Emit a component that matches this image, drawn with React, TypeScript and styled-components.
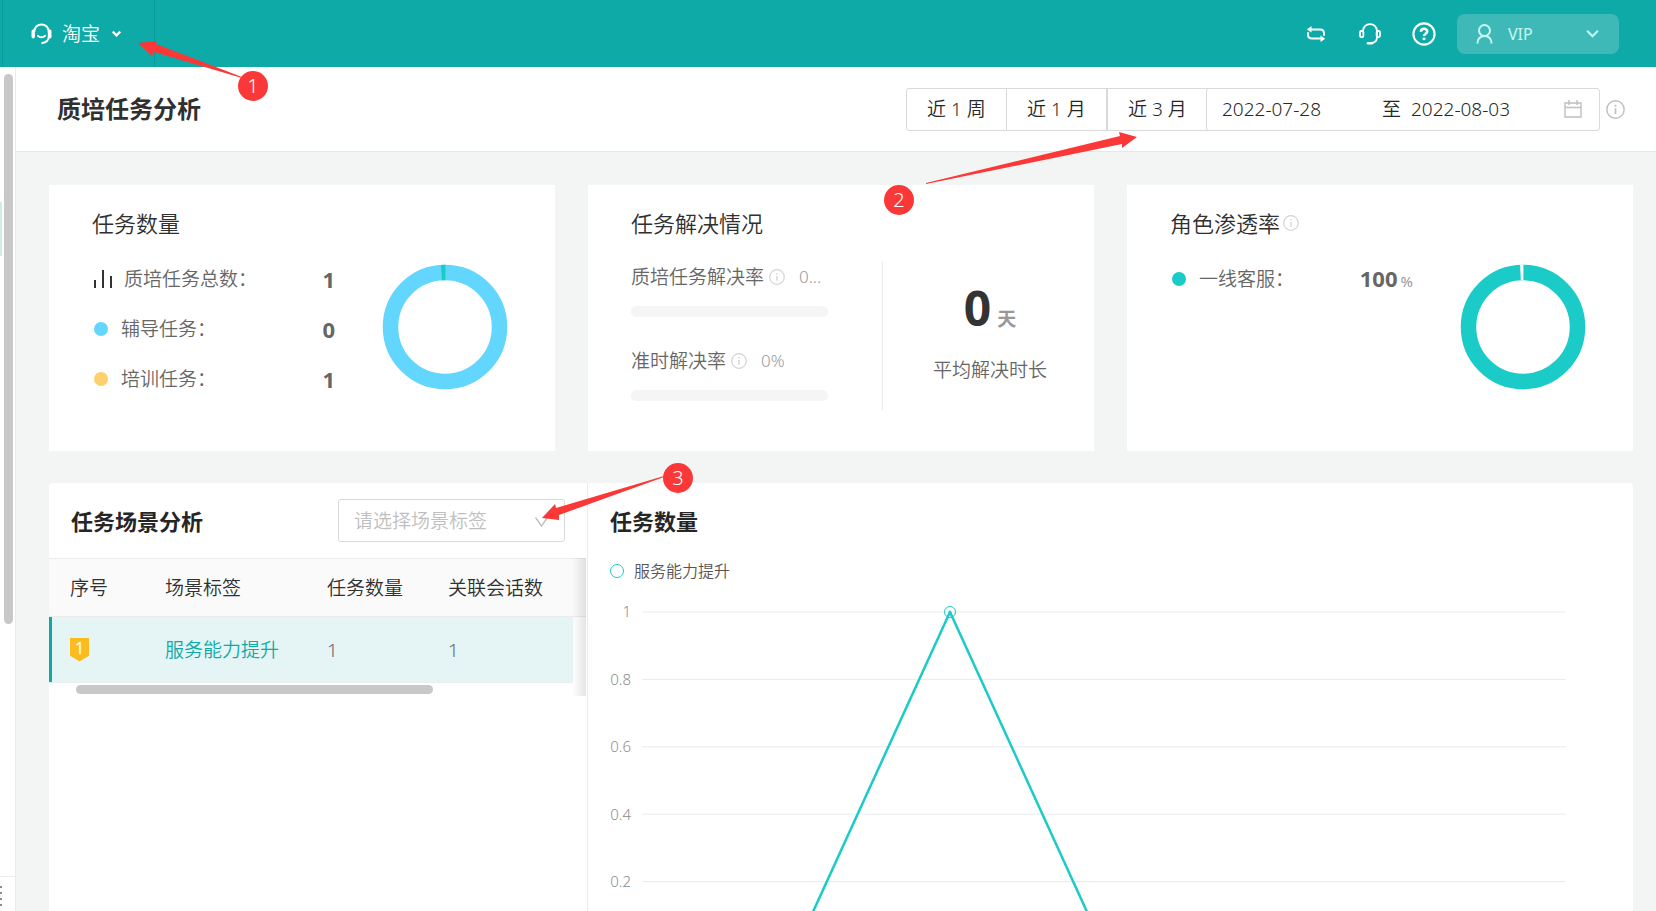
import React from "react";
import styled, { createGlobalStyle } from "styled-components";

const TEAL = "#0daaa7";
const CYAN = "#1acbc8";
const RED = "#fb3838";
const LINE = "#ebebeb";

const GlobalStyle = createGlobalStyle`
  *, *::before, *::after { box-sizing: border-box; }
  body {
    margin: 0;
    font-family: "Noto Sans", "Noto Sans CJK SC", sans-serif;
    font-size: 19px;
    line-height: 28px;
    font-weight: 350;
    color: #303030;
    background: #f3f5f5;
  }
  button, input, select { font: inherit; color: inherit; }
  h1, h2 { margin: 0; }
`;

const Shell = styled.div`
  display: flex;
  flex-direction: column;
  height: 100vh;
  overflow: hidden;
`;

/* ---------- top bar ---------- */

const TopBar = styled.header`
  display: flex;
  flex: none;
  align-items: center;
  justify-content: space-between;
  height: 67px;
  padding: 0 37px 0 2px;
  background: ${TEAL};
  color: #fff;
`;

const Brand = styled.div`
  position: relative;
  z-index: 2;
  width: 153px;
  height: 67px;
  border: solid #0b9a99;
  border-width: 0 1px;
`;

const BrandButton = styled.button`
  display: flex;
  align-items: center;
  width: 100%;
  height: 100%;
  padding: 0 0 0 28px;
  border: 0;
  background: none;

  span { margin: 0 12px 0 10px; }
`;

const Tools = styled.div`
  display: flex;
  align-items: center;
`;

const IconButton = styled.button`
  display: flex;
  align-items: center;
  justify-content: center;
  width: 54px;
  height: 54px;
  padding: 0;
  border: 0;
  background: none;
`;

const Account = styled.button`
  display: flex;
  align-items: center;
  gap: 15px;
  width: 162px;
  height: 40px;
  margin-left: 6px;
  padding: 0 20px 0 19px;
  border: 0;
  border-radius: 8px;
  background: #3eb9b8;
  color: #c9f7f3;
  font-size: 16px;
  font-weight: 400;

  span { flex: 1; text-align: left; }
`;

/* ---------- page frame ---------- */

const Body = styled.div`
  display: flex;
  flex: 1;
  min-height: 0;
`;

const Sidebar = styled.aside`
  display: flex;
  flex: none;
  flex-direction: column;
  justify-content: space-between;
  width: 16px;
  border-right: 1px solid ${LINE};
  background: #fff;
`;

const SideTrack = styled.div`
  display: flex;
  justify-content: space-between;
  padding: 7px 2px 0 0;
`;

const SideActive = styled.div`
  width: 2px;
  height: 54px;
  margin-top: 128px;
  background: #d3ebe6;
`;

const SideThumb = styled.div`
  width: 9px;
  height: 550px;
  border-radius: 5px;
  background: #c8c8c8;
`;

const SideFooter = styled.div`
  display: flex;
  height: 35px;
  padding-top: 9px;
  border-top: 1px solid ${LINE};
`;

const Main = styled.main`
  flex: 1;
  min-width: 0;
  overflow: hidden;
`;

const PageHead = styled.div`
  display: flex;
  align-items: center;
  justify-content: space-between;
  height: 85px;
  padding: 0 31px 0 41px;
  border-bottom: 1px solid #e6e9e9;
  background: #fff;
`;

const PageTitle = styled.h1`
  font-size: 24px;
  line-height: 36px;
  font-weight: 700;
`;

const Range = styled.div`
  position: relative;
  z-index: 2;
  display: flex;
  align-items: center;
  color: #262626;
`;

const RangeButton = styled.button<{ $edge?: "first" | "last" }>`
  width: 101px;
  height: 43px;
  margin-left: ${(p) => (p.$edge ? 0 : -1)}px;
  padding: 0;
  border: 1px solid #d9d9d9;
  border-radius: ${(p) => (p.$edge === "first" ? "3px 0 0 3px" : 0)};
  background: #fff;
`;

const DatePicker = styled.div`
  display: flex;
  align-items: center;
  height: 43px;
  margin: 0 6px 0 -2px;
  padding: 0 17px 0 15px;
  border: 1px solid #d9d9d9;
  border-radius: 3px;
  background: #fff;

  label { margin: 0 10px; }
  svg { margin-left: 3px; }
`;

const DateInput = styled.input`
  width: 150px;
  padding: 0;
  border: 0;
  outline: 0;
  background: none;
`;

/* ---------- summary cards ---------- */

const Content = styled.div`
  padding: 33px 23px 33px 33px;
`;

const Cards = styled.div`
  display: grid;
  grid-template-columns: repeat(3, minmax(0, 1fr));
  gap: 33px;
  margin-bottom: 32px;
`;

const Card = styled.section`
  height: 266px;
  padding: 22px 0 22px 43px;
  background: #fff;
`;

const CardTitle = styled.h2`
  display: flex;
  align-items: center;
  gap: 3px;
  font-size: 22px;
  line-height: 32px;
  font-weight: 350;
`;

const CardBody = styled.div`
  display: flex;
  justify-content: space-between;
`;

const Stats = styled.ul`
  width: 243px;
  margin: 0;
  padding: 15px 0 0;
  list-style: none;
  color: #666;
`;

const Stat = styled.li`
  display: flex;
  align-items: center;
  height: 50px;
`;

const Mark = styled.span<{ $wide?: boolean }>`
  display: flex;
  width: ${(p) => (p.$wide ? 32 : 29)}px;
  padding-left: 2px;
`;

const Dot = styled.i<{ $color: string }>`
  width: 14px;
  height: 14px;
  border-radius: 50%;
  background: ${(p) => p.$color};
`;

const StatLabel = styled.span`
  flex: 1;
`;

const StatValue = styled.strong`
  font-size: 22px;
  font-weight: 700;
`;

const Unit = styled.small`
  margin-left: 3px;
  font-size: 15px;
  font-weight: 400;
  color: #999;
`;

const DonutBox = styled.div`
  padding: 25px 47px 0 0;

  svg { display: block; }
`;

const Rates = styled.div`
  display: flex;
  flex-direction: column;
  gap: 29px;
  width: 197px;
  padding-top: 23px;
  color: #666;
`;

const Rate = styled.div`
  display: flex;
  flex-wrap: wrap;
  align-items: center;
  height: 55px;
`;

const RateName = styled.span`
  margin-right: 5px;
`;

const RateValue = styled.span`
  margin-left: 14px;
  font-size: 17px;
  color: #999;
`;

const RateTrack = styled.div`
  width: 100%;
  height: 11px;
  margin-top: 14px;
  border-radius: 6px;
  background: #f5f5f5;
`;

const Duration = styled.div`
  display: flex;
  flex: 1;
  flex-direction: column;
  align-items: center;
  height: 149px;
  margin: 22px 0 0 54px;
  padding-left: 3px;
  border-left: 1px solid ${LINE};
  color: #666;
`;

const DurationValue = styled.p`
  display: flex;
  align-items: baseline;
  gap: 6px;
  margin: 17px 0 7px;
  line-height: 60px;

  strong { font-size: 48px; font-weight: 700; color: #333; }
  b { font-size: 19px; font-weight: 700; color: #999; }
`;

/* ---------- lower panels ---------- */

const Panels = styled.div`
  display: grid;
  grid-template-columns: 539fr 1045fr;
  border-radius: 4px;
  background: #fff;
`;

const ScenePanel = styled.section`
  min-width: 0;
  border-right: 1px solid ${LINE};
`;

const PanelHead = styled.div`
  display: flex;
  align-items: center;
  justify-content: space-between;
  height: 75px;
  padding: 0 22px;
`;

const PanelTitle = styled.h2`
  font-size: 22px;
  line-height: 32px;
  font-weight: 700;
  color: #262626;
`;

const Picker = styled.div`
  position: relative;
  z-index: 2;
  height: 43px;
`;

const Select = styled.select`
  width: 227px;
  height: 43px;
  padding: 0 32px 0 15px;
  border: 1px solid #d9d9d9;
  border-radius: 3px;
  appearance: none;
  background: #fff;
  color: #bfbfbf;
`;

const PickerArrow = styled.svg`
  position: absolute;
  top: 17px;
  right: 17px;
  pointer-events: none;
`;

const TableBox = styled.div`
  position: relative;
  height: 138px;
  padding-right: 1px;
`;

const Table = styled.table`
  width: 100%;
  table-layout: fixed;
  border-collapse: separate;
  border-spacing: 0;
  text-align: left;

  th, td { padding: 0 0 0 21px; }
  th {
    height: 59px;
    border: solid ${LINE};
    border-width: 1px 0;
    background: #fafafa;
    font-weight: 350;
  }
  td {
    height: 66px;
    border-bottom: 1px solid #e8eeee;
    background: #e5f5f5;
    color: #666;
  }
  td:first-child { box-shadow: inset 3px 0 ${TEAL}; }
  td:last-child { border: 0; background: #fff; }
  col:nth-child(1) { width: 95px; }
  col:nth-child(2) { width: 162px; }
  col:nth-child(3) { width: 121px; }
  col:nth-child(5) { width: 13px; }
`;

const SceneLink = styled.a`
  color: ${TEAL};
  text-decoration: none;
`;

const Rank = styled.span`
  display: flex;
  justify-content: center;
  width: 19px;
  height: 24px;
  background: #fbbd1e;
  clip-path: polygon(0 0, 100% 0, 100% 76%, 50% 100%, 0 76%);
  color: #fff;
  font-size: 17px;
  line-height: 20px;
  font-weight: 400;
`;

const TableThumb = styled.div`
  width: 357px;
  height: 9px;
  margin: 2px 0 0 27px;
  border-radius: 5px;
  background: #c8c8c8;
`;

const EdgeShade = styled.div`
  position: absolute;
  top: 0;
  right: 1px;
  width: 14px;
  height: 138px;
  background: linear-gradient(to right, rgba(0, 0, 0, 0), rgba(0, 0, 0, 0.1));
`;

const ChartPanel = styled.section`
  min-width: 0;
`;

const Legend = styled.div`
  display: flex;
  align-items: center;
  gap: 10px;
  height: 26px;
  padding-left: 22px;
  font-size: 16px;
  color: #555;
`;

const LegendMark = styled.i`
  width: 14px;
  height: 14px;
  border: 1px solid ${CYAN};
  border-radius: 50%;
`;

const Chart = styled.div`
  display: flex;
  gap: 11px;
  padding: 28px 67px 40px 22px;
`;

const Axis = styled.div`
  display: flex;
  flex-direction: column;
  justify-content: space-between;
  width: 21px;
  height: 290px;
  margin-top: -11px;
  font-size: 15px;
  line-height: 20px;
  text-align: right;
  color: #8c8c8c;
`;

const Plot = styled.svg`
  flex: 1;
  min-width: 0;
  height: 337px;
  overflow: visible;
`;

/* ---------- callouts ---------- */

const CalloutLayer = styled.svg<{ $left: number; $top: number }>`
  position: absolute;
  left: ${(p) => p.$left}px;
  top: ${(p) => p.$top}px;
  pointer-events: none;

  text { fill: #fff; font-size: 20px; text-anchor: middle; }
`;

type CalloutProps = {
  label: string;
  left: number;
  top: number;
  width: number;
  height: number;
  arrow: string;
  cx: number;
  cy: number;
};

function Callout({ label, left, top, width, height, arrow, cx, cy }: CalloutProps) {
  return (
    <CalloutLayer $left={left} $top={top} width={width} height={height}>
      <polygon points={arrow} fill={RED} />
      <circle cx={cx} cy={cy} r="15" fill={RED} />
      <text x={cx} y={cy + 7}>{label}</text>
    </CalloutLayer>
  );
}

/* ---------- icons ---------- */

const Info = ({ size = 16, color = "#d4d4d4" }: { size?: number; color?: string }) => (
  <svg width={size} height={size} viewBox="0 0 16 16" fill="none" stroke={color}>
    <circle cx="8" cy="8" r="7.3" strokeWidth="1.2" />
    <path d="M8 7v4.800M8 4v1.600" strokeWidth="1.4" />
  </svg>
);

const Chevron = ({ size, width }: { size: number; width: number }) => (
  <svg width={size} height={size} viewBox="0 0 12 12" fill="none" stroke="currentColor" strokeWidth={width}>
    <path d="M1 3.500 6 8.500 11 3.500" />
  </svg>
);

const BrandIcon = () => (
  <svg width="21" height="22" viewBox="0 0 21 22" fill="none" stroke="#fff">
    <path d="M3.200 9C3.200 4.400 6.400 1.400 10.500 1.400S17.800 4.400 17.800 9v4.500c0 3.600-2.800 6-7.300 6.700" strokeWidth="2" />
    <path d="M2.200 8.200v5.600M18.800 8.200v5.600" strokeWidth="3.400" strokeLinecap="round" />
    <path d="M7 12.800c1.800 2 5.200 2 7 0" strokeWidth="2" strokeLinecap="round" />
  </svg>
);

const SwapIcon = () => (
  <svg width="20" height="16" viewBox="0 0 20 16" fill="none" stroke="#fff" strokeWidth="2">
    <path d="M4 3.500h10c2.700 0 4 1.300 4 4v2.200" />
    <path d="M16 12.500H6c-2.700 0-4-1.300-4-4V6.300" />
    <path d="M5.500 0v6.600L.8 3.500zM14.500 9.400V16l4.700-3.300z" fill="#fff" stroke="none" />
  </svg>
);

const HeadsetIcon = () => (
  <svg width="22" height="22" viewBox="0 0 22 22" fill="none" stroke="#fff" strokeWidth="1.800">
    <path d="M4 8C4.500 3.800 7.200 1.200 11 1.200S17.500 3.800 18 8v6c0 3.300-2 5.500-5 6" />
    <rect x="1" y="8" width="3.400" height="6.200" rx="1.400" />
    <rect x="17.600" y="8" width="3.400" height="6.200" rx="1.400" />
    <path d="M9 20.300h4" strokeWidth="2.600" strokeLinecap="round" />
  </svg>
);

const HelpIcon = () => (
  <svg width="24" height="24" viewBox="0 0 24 24" fill="none" stroke="#fff">
    <circle cx="12" cy="12" r="10.600" strokeWidth="2.100" />
    <path d="M8.900 9.800c0-4 6.300-4 6.300-.3 0 2.200-3.200 2.200-3.200 4.600" strokeWidth="2.600" />
    <path d="M12 15.600v2.500" strokeWidth="2.800" />
  </svg>
);

const UserIcon = () => (
  <svg width="17" height="20" viewBox="0 0 17 20" fill="none" stroke="currentColor" strokeWidth="2">
    <circle cx="8.500" cy="6.500" r="5.500" />
    <path d="M1.500 19.500c0-4.600 2.800-7.500 7-7.500s7 2.900 7 7.500" />
  </svg>
);

const CalendarIcon = () => (
  <svg width="18" height="18" viewBox="0 0 18 18" fill="none" stroke="#bfbfbf">
    <path d="M1 3h16v14H1zM1 7.500h16M5 0v5M13 0v5" strokeWidth="1.400" />
  </svg>
);

const BarsIcon = () => (
  <svg width="18" height="20" viewBox="0 0 18 20" stroke="#333" strokeWidth="2">
    <path d="M1 11v8M9 1v18M17 7v12" />
  </svg>
);

const MenuIcon = () => (
  <svg width="2" height="20" viewBox="0 0 2 20" stroke="#7d9298" strokeWidth="2">
    <path d="M0 1h2M0 7h2M0 13h2M0 19h2" />
  </svg>
);

function Donut({ color, gap, cut }: { color: string; gap: string; cut: number }) {
  const r = 54.5;
  const round = 2 * Math.PI * r;
  return (
    <svg width="126" height="126" viewBox="0 0 126 126" fill="none" strokeWidth="15.500">
      <circle cx="63" cy="63" r={r} stroke={color} />
      <circle
        cx="63"
        cy="63"
        r={r}
        stroke={gap}
        strokeDasharray={`${cut} ${round - cut}`}
        strokeDashoffset={round / 4 + cut}
      />
    </svg>
  );
}

/* ---------- data ---------- */

const taskStats = [
  { label: "质培任务总数：", value: 1, color: "" },
  { label: "辅导任务：", value: 0, color: "#62d6fd" },
  { label: "培训任务：", value: 1, color: "#fecf6c" },
];

const rates = [
  { label: "质培任务解决率", value: "0..." },
  { label: "准时解决率", value: "0%" },
];

const ticks = ["1", "0.8", "0.6", "0.4", "0.2"];
const series = [0, 0, 1, 0, 0, 0, 0];
const PLOT_HEIGHT = 337;
const pointX = (i: number) => `${(i * 100) / (series.length - 1)}%`;
const pointY = (v: number) => PLOT_HEIGHT * (1 - v);

export default function App() {
  return (
    <Shell>
      <GlobalStyle />
      <TopBar>
        <Brand>
          <BrandButton>
            <BrandIcon />
            <span>淘宝</span>
            <Chevron size={9} width={3} />
          </BrandButton>
          <Callout
            label="1"
            left={127}
            top={36}
            width={140}
            height={70}
            arrow="8,7 27,5 26,8 112,41 112,42 24,16 22,20"
            cx={123}
            cy={50}
          />
        </Brand>
        <Tools>
          <IconButton aria-label="切换"><SwapIcon /></IconButton>
          <IconButton aria-label="客服"><HeadsetIcon /></IconButton>
          <IconButton aria-label="帮助"><HelpIcon /></IconButton>
          <Account>
            <UserIcon />
            <span>VIP</span>
            <Chevron size={13} width={2} />
          </Account>
        </Tools>
      </TopBar>

      <Body>
        <Sidebar>
          <SideTrack>
            <SideActive />
            <SideThumb />
          </SideTrack>
          <SideFooter><MenuIcon /></SideFooter>
        </Sidebar>

        <Main>
          <PageHead>
            <PageTitle>质培任务分析</PageTitle>
            <Range>
              <RangeButton $edge="first">近 1 周</RangeButton>
              <RangeButton>近 1 月</RangeButton>
              <RangeButton $edge="last">近 3 月</RangeButton>
              <DatePicker>
                <DateInput id="from" aria-label="开始日期" defaultValue="2022-07-28" />
                <label htmlFor="to">至</label>
                <DateInput id="to" defaultValue="2022-08-03" />
                <CalendarIcon />
              </DatePicker>
              <Info size={19} color="#bfbfbf" />
              <Callout
                label="2"
                left={-22}
                top={38}
                width={260}
                height={90}
                arrow="253,11 235,6 236,10 42,57 42,58 238,18 238,22"
                cx={15}
                cy={74}
              />
            </Range>
          </PageHead>

          <Content>
            <Cards>
              <Card>
                <CardTitle>任务数量</CardTitle>
                <CardBody>
                  <Stats>
                    {taskStats.map((s) => (
                      <Stat key={s.label}>
                        <Mark $wide={!s.color}>{s.color ? <Dot $color={s.color} /> : <BarsIcon />}</Mark>
                        <StatLabel>{s.label}</StatLabel>
                        <StatValue>{s.value}</StatValue>
                      </Stat>
                    ))}
                  </Stats>
                  <DonutBox><Donut color="#62d6fd" gap={CYAN} cut={4} /></DonutBox>
                </CardBody>
              </Card>

              <Card>
                <CardTitle>任务解决情况</CardTitle>
                <CardBody>
                  <Rates>
                    {rates.map((r) => (
                      <Rate key={r.label}>
                        <RateName>{r.label}</RateName>
                        <Info />
                        <RateValue>{r.value}</RateValue>
                        <RateTrack />
                      </Rate>
                    ))}
                  </Rates>
                  <Duration>
                    <DurationValue><strong>0</strong><b>天</b></DurationValue>
                    平均解决时长
                  </Duration>
                </CardBody>
              </Card>

              <Card>
                <CardTitle>角色渗透率<Info /></CardTitle>
                <CardBody>
                  <Stats>
                    <Stat>
                      <Mark><Dot $color={CYAN} /></Mark>
                      <StatLabel>一线客服：</StatLabel>
                      <StatValue>100<Unit>%</Unit></StatValue>
                    </Stat>
                  </Stats>
                  <DonutBox><Donut color={CYAN} gap="#fff" cut={3} /></DonutBox>
                </CardBody>
              </Card>
            </Cards>

            <Panels>
              <ScenePanel>
                <PanelHead>
                  <PanelTitle>任务场景分析</PanelTitle>
                  <Picker>
                    <Select aria-label="场景标签">
                      <option>请选择场景标签</option>
                    </Select>
                    <PickerArrow width="13" height="12" viewBox="0 0 13 12" fill="none" stroke="#bfbfbf">
                      <path d="M.5 1.500 6.500 10 12.500 1.500" strokeWidth="1.400" />
                    </PickerArrow>
                    <Callout
                      label="3"
                      left={198}
                      top={-39}
                      width={160}
                      height={66}
                      arrow="6,58 19,44 20,48 128,16 128,17 23,55 23,60"
                      cx={142}
                      cy={18}
                    />
                  </Picker>
                </PanelHead>
                <TableBox>
                  <Table>
                    <colgroup><col /><col /><col /><col /><col /></colgroup>
                    <thead>
                      <tr>
                        <th>序号</th>
                        <th>场景标签</th>
                        <th>任务数量</th>
                        <th>关联会话数</th>
                        <th />
                      </tr>
                    </thead>
                    <tbody>
                      <tr>
                        <td><Rank>1</Rank></td>
                        <td><SceneLink href="#scene">服务能力提升</SceneLink></td>
                        <td>1</td>
                        <td>1</td>
                        <td />
                      </tr>
                    </tbody>
                  </Table>
                  <TableThumb />
                  <EdgeShade />
                </TableBox>
              </ScenePanel>

              <ChartPanel>
                <PanelHead><PanelTitle>任务数量</PanelTitle></PanelHead>
                <Legend><LegendMark />服务能力提升</Legend>
                <Chart>
                  <Axis>{ticks.map((t) => <span key={t}>{t}</span>)}</Axis>
                  <Plot>
                    {ticks.map((t) => (
                      <line key={t} x1="0" x2="100%" y1={pointY(+t)} y2={pointY(+t)} stroke="#e9ebeb" />
                    ))}
                    {series.slice(1).map((v, i) => (
                      <line
                        key={i}
                        x1={pointX(i)}
                        y1={pointY(series[i])}
                        x2={pointX(i + 1)}
                        y2={pointY(v)}
                        stroke={CYAN}
                        strokeWidth="2.500"
                        strokeLinecap="round"
                      />
                    ))}
                    {series.map((v, i) => (
                      <circle key={i} cx={pointX(i)} cy={pointY(v)} r="5.500" fill="none" stroke={CYAN} />
                    ))}
                  </Plot>
                </Chart>
              </ChartPanel>
            </Panels>
          </Content>
        </Main>
      </Body>
    </Shell>
  );
}
